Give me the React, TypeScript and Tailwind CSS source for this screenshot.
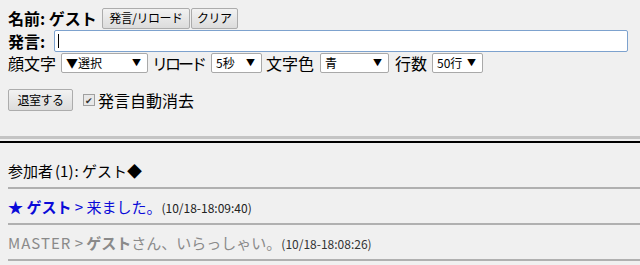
import React from 'react';

const font = { fontFamily: '"Noto Sans CJK JP", "Liberation Sans", sans-serif' };

function Select({ label, width }: { label: string; width: string }) {
  return (
    <div className={`${width} shrink-0 h-[20px] bg-white border border-[#a9a9a9] rounded-[2px] flex items-center justify-between pl-[4px] pr-[6px] text-[12px] text-black leading-none`}>
      <span>{label}</span>
      <span className="text-[9px]">▼</span>
    </div>
  );
}

function Btn({ children, className = '' }: { children: React.ReactNode; className?: string }) {
  return (
    <button className={`h-[21px] px-0 whitespace-nowrap text-[12px] tracking-[-0.5px] leading-none text-black border border-[#acacac] rounded-[2px] bg-gradient-to-b from-[#f2f2f2] to-[#dcdcdc] ${className}`}>
      {children}
    </button>
  );
}

export default function App() {
  return (
    <div className="w-[640px] h-[265px] overflow-hidden bg-[#f0f0f0] text-black" style={font}>
      <div className="pl-[8px] pr-[12px] pt-[7px] pb-[25px]">
        <div className="flex items-center h-[22px]">
          <span className="text-[16px] font-bold leading-none mr-[5px]">名前: ゲスト</span>
          <Btn className="w-[88px]">発言/リロード</Btn>
          <Btn className="w-[47px] ml-[1px]">クリア</Btn>
        </div>
        <div className="flex items-center h-[23px]">
          <span className="text-[16px] font-bold leading-none w-[46px]">発言:</span>
          <div className="flex-1 h-[22px] bg-white border border-[#7da2ce] rounded-[2px] flex items-center pl-[3px]">
            <span className="w-px h-[14px] bg-black" />
          </div>
        </div>
        <div className="flex items-center h-[21px] text-[16px] leading-none whitespace-nowrap">
          <span className="w-[53px] shrink-0">顔文字</span>
          <Select label="▼選択" width="w-[87px]" />
          <span className="w-[63px] shrink-0 pl-[4px] tracking-[-3px]">リロード</span>
          <Select label="5秒" width="w-[51px]" />
          <span className="w-[58px] shrink-0 pl-[4px]">文字色</span>
          <Select label="青" width="w-[69px]" />
          <span className="w-[43px] shrink-0 pl-[6px]">行数</span>
          <Select label="50行" width="w-[51px]" />
        </div>
        <div className="flex items-center mt-[16px] h-[22px]">
          <Btn className="w-[65px] h-[22px]">退室する</Btn>
          <div className="ml-[10px] w-[12px] h-[12px] border border-[#a0a0a0] bg-[#e8e8e8] flex items-center justify-center text-[9px] leading-none text-[#333]">✔</div>
          <span className="ml-[3px] text-[16px] leading-none">発言自動消去</span>
        </div>
      </div>
      <div className="h-[3px] bg-[#c4c4c4]" />
      <div className="h-[2px] bg-[#f0f0f0]" />
      <div className="h-[2px] bg-black" />
      <div className="pl-[8px] pt-[19px]">
        <div className="text-[15px] leading-[18px] pb-[7px]">
          参加者<span className="ml-[2px] mr-[1px]">(1)</span>: ゲスト◆
        </div>
        <div className="border-t-2 border-[#b0b0b0] pt-[9px] pb-[6px] text-[15px] leading-[18px] text-[#0a0ad8]">
          <span className="font-bold">★ ゲスト</span> &gt; 来ました。<span className="text-[12px] text-[#222]">(10/18-18:09:40)</span>
        </div>
        <div className="border-t-2 border-[#b0b0b0] pt-[9px] pb-[6px] text-[15px] leading-[18px] text-[#8a8a8a]">
          <span className="tracking-[1px]">MASTER</span> &gt; <span className="font-bold">ゲスト</span>さん、いらっしゃい。<span className="text-[12px] text-[#333]">(10/18-18:08:26)</span>
        </div>
        <div className="border-t-2 border-[#b0b0b0]" />
      </div>
    </div>
  );
}
